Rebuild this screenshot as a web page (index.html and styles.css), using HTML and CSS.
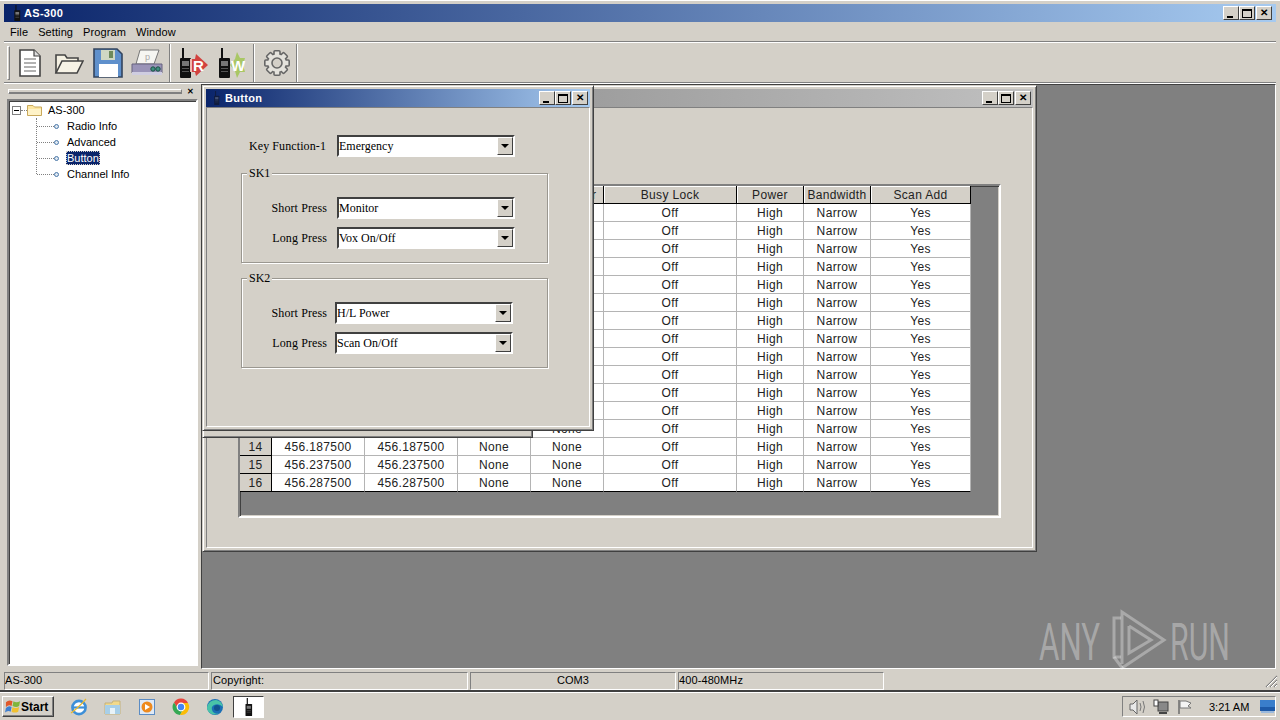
FILE: index.html
```html
<!DOCTYPE html>
<html lang="en">
<head>
    <meta charset="UTF-8">
    <title>AS-300</title>
    <link rel="stylesheet" href="styles.css">
</head>
<body>

    <!-- shared icon parts -->
    <svg class="defs" width="0" height="0">
        <symbol id="radio" viewBox="0 0 14 30">
            <rect x="4" y="0" width="2" height="12" fill="#111"/>
            <rect x="2" y="10" width="11" height="20" rx="1" fill="#111"/>
            <rect x="4" y="13" width="7" height="5" fill="#777"/>
            <rect x="4" y="20" width="7" height="1" fill="#555"/>
            <rect x="4" y="23" width="7" height="1" fill="#555"/>
        </symbol>
        <rect id="tooth" x="10" y="0.8" width="6" height="6" rx="1" fill="#e4e2dc" stroke="#666" stroke-width="1.6"/>
    </svg>

    <div class="app">
        <div class="titlebar">
            <svg class="title-icon" width="10" height="16"><use href="#radio"/></svg>
            <span class="title-text">AS-300</span>
            <div class="win-buttons">
                <span class="win-btn"><i class="ico-min"></i></span>
                <span class="win-btn"><i class="ico-max"></i></span>
                <span class="win-btn btn-close">&#10005;</span>
            </div>
        </div>

        <div class="menubar">
            <span>File</span>
            <span>Setting</span>
            <span>Program</span>
            <span>Window</span>
        </div>

        <div class="toolbar">
            <div class="grip"></div>
            <div class="tool">
                <svg width="24" height="30" viewBox="0 0 24 30">
                    <path d="M2 2H16L22 8V28H2Z" fill="#fff" stroke="#444" stroke-width="1.6"/>
                    <path d="M16 2V8H22" fill="#ddd" stroke="#444" stroke-width="1.2"/>
                    <path d="M6 11H18M6 15H18M6 19H18M6 23H18" stroke="#666" stroke-width="1.2"/>
                </svg>
            </div>
            <div class="tool">
                <svg width="30" height="24" viewBox="0 0 30 24">
                    <path d="M2 22V4H11L13 7H24V11" fill="#f4f0e2" stroke="#444" stroke-width="1.6"/>
                    <path d="M2 22L8 10H29L23 22Z" fill="#f7f3e6" stroke="#444" stroke-width="1.6"/>
                </svg>
            </div>
            <div class="tool">
                <svg width="30" height="30" viewBox="0 0 30 30">
                    <path d="M1 1H24L29 6V29H1Z" fill="#5f90cc" stroke="#33445e" stroke-width="1.6"/>
                    <rect x="8" y="2" width="14" height="10" fill="#cfd8c4"/>
                    <rect x="16" y="3" width="4" height="7" fill="#6e8a5c"/>
                    <rect x="6" y="16" width="19" height="13" fill="#fff"/>
                </svg>
            </div>
            <div class="tool">
                <svg width="32" height="28" viewBox="0 0 32 28">
                    <path d="M9 1H28L23 15H5Z" fill="#f6f6f2" stroke="#777"/>
                    <text x="14" y="11" class="printer-mark">p</text>
                    <path d="M1 15H31V24H1Z" fill="#9a94b8" stroke="#66627e"/>
                    <rect x="1" y="23" width="30" height="3" fill="#cfcde0"/>
                    <circle cx="22" cy="20" r="2.2" fill="#3f8f7f" stroke="#1d4f46"/>
                    <circle cx="27" cy="20" r="2.2" fill="#3f8f7f" stroke="#1d4f46"/>
                </svg>
            </div>
            <div class="tool-sep"></div>
            <div class="tool">
                <svg width="30" height="31" viewBox="0 0 30 31">
                    <use href="#radio" x="0" y="1" width="14" height="30"/>
                    <path d="M12 12H17L18 7L30 18L18 29L17 25H12Z" fill="#d2423f"/>
                    <path d="M12 12H14V25H12Z" fill="#f0b8b0"/>
                    <text x="15" y="24" class="tool-letter">R</text>
                </svg>
            </div>
            <div class="tool">
                <svg width="30" height="31" viewBox="0 0 30 31">
                    <use href="#radio" x="0" y="1" width="14" height="30"/>
                    <path d="M13 18L18 12L20 5L23 11H28L26 18L28 25H23L20 31L18 24Z" fill="#a9c765"/>
                    <text x="14" y="24" class="tool-letter">W</text>
                </svg>
            </div>
            <div class="tool-sep sep-b"></div>
            <div class="tool">
                <svg width="26" height="26" viewBox="0 0 26 26">
                    <circle cx="13" cy="13" r="9.4" fill="#e4e2dc" stroke="#666" stroke-width="1.6"/>
                    <use href="#tooth"/>
                    <use href="#tooth" transform="rotate(45 13 13)"/>
                    <use href="#tooth" transform="rotate(90 13 13)"/>
                    <use href="#tooth" transform="rotate(135 13 13)"/>
                    <use href="#tooth" transform="rotate(180 13 13)"/>
                    <use href="#tooth" transform="rotate(225 13 13)"/>
                    <use href="#tooth" transform="rotate(270 13 13)"/>
                    <use href="#tooth" transform="rotate(315 13 13)"/>
                    <circle cx="13" cy="13" r="8.8" fill="#e4e2dc"/>
                    <circle cx="13" cy="13" r="5" fill="#d4d0c8" stroke="#666" stroke-width="1.6"/>
                </svg>
            </div>
            <div class="tool-sep sep-c"></div>
        </div>

        <div class="main">
            <!-- Left tree panel -->
            <div class="side">
                <div class="side-head">
                    <div class="side-grip"></div>
                    <span class="side-close">&#10005;</span>
                </div>
                <div class="tree">
                    <div class="tree-root">
                        <span class="expander"></span>
                        <span class="root-line"></span>
                        <svg width="15" height="12" viewBox="0 0 15 12">
                            <path d="M0.5 11.5V1.5H6L7.5 3H14.5V11.5Z" fill="#fde6a0" stroke="#c9a95c"/>
                            <rect x="1" y="5" width="13" height="6" fill="#fff3c8"/>
                        </svg>
                        <span class="tree-label">AS-300</span>
                    </div>
                    <ul class="tree-items">
                        <li><span class="branch"></span><span class="node"></span><span class="tree-label">Radio Info</span></li>
                        <li><span class="branch"></span><span class="node"></span><span class="tree-label">Advanced</span></li>
                        <li><span class="branch"></span><span class="node"></span><span class="tree-label selected">Button</span></li>
                        <li><span class="branch"></span><span class="node"></span><span class="tree-label">Channel Info</span></li>
                    </ul>
                </div>
            </div>

            <!-- MDI area with child windows -->
            <div class="mdi">
                <div class="win win-channel">
                    <div class="win-title inactive">
                        <div class="win-buttons">
                            <span class="win-btn"><i class="ico-min"></i></span>
                            <span class="win-btn"><i class="ico-max"></i></span>
                            <span class="win-btn btn-close">&#10005;</span>
                        </div>
                    </div>
                    <div class="win-body channel-body">
                        <div class="grid-box">
                            <table class="grid">
                                <colgroup>
                                    <col class="c-num"><col class="c-freq"><col class="c-freq"><col class="c-qt"><col class="c-qt">
                                    <col class="c-busy"><col class="c-small"><col class="c-small"><col class="c-scan">
                                </colgroup>
                                <thead>
                                    <tr><th></th><th></th><th></th><th>T Encoder</th><th>T Decoder</th><th>Busy Lock</th><th>Power</th><th>Bandwidth</th><th>Scan Add</th></tr>
                                </thead>
                                <tbody>
                                    <tr><td class="num"></td><td></td><td></td><td></td><td></td><td>Off</td><td>High</td><td>Narrow</td><td>Yes</td></tr>
                                    <tr><td class="num"></td><td></td><td></td><td></td><td></td><td>Off</td><td>High</td><td>Narrow</td><td>Yes</td></tr>
                                    <tr><td class="num"></td><td></td><td></td><td></td><td></td><td>Off</td><td>High</td><td>Narrow</td><td>Yes</td></tr>
                                    <tr><td class="num"></td><td></td><td></td><td></td><td></td><td>Off</td><td>High</td><td>Narrow</td><td>Yes</td></tr>
                                    <tr><td class="num"></td><td></td><td></td><td></td><td></td><td>Off</td><td>High</td><td>Narrow</td><td>Yes</td></tr>
                                    <tr><td class="num"></td><td></td><td></td><td></td><td></td><td>Off</td><td>High</td><td>Narrow</td><td>Yes</td></tr>
                                    <tr><td class="num"></td><td></td><td></td><td></td><td></td><td>Off</td><td>High</td><td>Narrow</td><td>Yes</td></tr>
                                    <tr><td class="num"></td><td></td><td></td><td></td><td></td><td>Off</td><td>High</td><td>Narrow</td><td>Yes</td></tr>
                                    <tr><td class="num"></td><td></td><td></td><td></td><td></td><td>Off</td><td>High</td><td>Narrow</td><td>Yes</td></tr>
                                    <tr><td class="num"></td><td></td><td></td><td></td><td></td><td>Off</td><td>High</td><td>Narrow</td><td>Yes</td></tr>
                                    <tr><td class="num"></td><td></td><td></td><td></td><td></td><td>Off</td><td>High</td><td>Narrow</td><td>Yes</td></tr>
                                    <tr><td class="num"></td><td></td><td></td><td></td><td></td><td>Off</td><td>High</td><td>Narrow</td><td>Yes</td></tr>
                                    <tr><td class="num"></td><td></td><td></td><td></td><td>None</td><td>Off</td><td>High</td><td>Narrow</td><td>Yes</td></tr>
                                    <tr><td class="num">14</td><td>456.187500</td><td>456.187500</td><td>None</td><td>None</td><td>Off</td><td>High</td><td>Narrow</td><td>Yes</td></tr>
                                    <tr><td class="num">15</td><td>456.237500</td><td>456.237500</td><td>None</td><td>None</td><td>Off</td><td>High</td><td>Narrow</td><td>Yes</td></tr>
                                    <tr><td class="num">16</td><td>456.287500</td><td>456.287500</td><td>None</td><td>None</td><td>Off</td><td>High</td><td>Narrow</td><td>Yes</td></tr>
                                </tbody>
                            </table>
                        </div>
                    </div>
                </div>

                <div class="win win-hidden"></div>

                <div class="win win-button">
                    <div class="win-title active">
                        <svg class="title-icon dim" width="9" height="14"><use href="#radio"/></svg>
                        <span class="title-text">Button</span>
                        <div class="win-buttons">
                            <span class="win-btn"><i class="ico-min"></i></span>
                            <span class="win-btn"><i class="ico-max"></i></span>
                            <span class="win-btn btn-close">&#10005;</span>
                        </div>
                    </div>
                    <div class="win-body button-body">
                        <div class="field first">
                            <label>Key Function-1</label>
                            <div class="combo"><span>Emergency</span><b class="combo-btn"></b></div>
                        </div>

                        <div class="group sk1">
                            <span class="legend">SK1</span>
                            <div class="field">
                                <label>Short Press</label>
                                <div class="combo"><span>Monitor</span><b class="combo-btn"></b></div>
                            </div>
                            <div class="field">
                                <label>Long Press</label>
                                <div class="combo"><span>Vox On/Off</span><b class="combo-btn"></b></div>
                            </div>
                        </div>

                        <div class="group sk2">
                            <span class="legend">SK2</span>
                            <div class="field">
                                <label>Short Press</label>
                                <div class="combo"><span>H/L Power</span><b class="combo-btn"></b></div>
                            </div>
                            <div class="field">
                                <label>Long Press</label>
                                <div class="combo"><span>Scan On/Off</span><b class="combo-btn"></b></div>
                            </div>
                        </div>
                    </div>
                </div>
            </div>
        </div>

        <div class="statusbar">
            <div class="status s-name">AS-300</div>
            <div class="status s-copy">Copyright:</div>
            <div class="status s-port">COM3</div>
            <div class="status s-band">400-480MHz</div>
            <svg class="resize" width="14" height="14" viewBox="0 0 14 14">
                <path d="M13 2L2 13M13 6L6 13M13 10L10 13" stroke="#808080" stroke-width="1.2"/>
                <path d="M13 3L3 13M13 7L7 13M13 11L11 13" stroke="#fff"/>
            </svg>
        </div>
    </div>

    <!-- Windows taskbar -->
    <div class="taskbar">
        <div class="start">
            <svg width="16" height="15" viewBox="0 0 17 15">
                <path d="M1 3Q4 0 8 2L7 7Q4 5 1 8Z" fill="#e0582a"/>
                <path d="M9 2Q12 4 16 2L15 7Q12 9 8 7Z" fill="#7fb53c"/>
                <path d="M1 9Q4 6 7 8L6 13Q3 11 0 14Z" fill="#3f7fd0"/>
                <path d="M8 8Q11 10 15 8L14 13Q10 15 7 13Z" fill="#f0c030"/>
            </svg>
            <span>Start</span>
        </div>
        <div class="launch">
            <svg width="18" height="18" viewBox="0 0 18 18">
                <circle cx="9" cy="9.5" r="6.6" fill="#fff" stroke="#3d8fd8" stroke-width="2.6"/>
                <path d="M3 9.5H15" stroke="#3d8fd8" stroke-width="2.2"/>
                <path d="M1 15Q8 10 16 1" fill="none" stroke="#e8b830" stroke-width="1.2"/>
            </svg>
        </div>
        <div class="launch">
            <svg width="18" height="18" viewBox="0 0 18 18">
                <path d="M1 5H8L9 3H16V16H1Z" fill="#f2d98a" stroke="#c4b17a"/>
                <rect x="1" y="7" width="15" height="9" fill="#a8cfe8"/>
                <rect x="6" y="10" width="5" height="6" fill="#e8f2f8"/>
            </svg>
        </div>
        <div class="launch">
            <svg width="16" height="16" viewBox="0 0 16 16">
                <rect x="0.5" y="0.5" width="15" height="15" fill="#dfe9f6" stroke="#5b8cc4"/>
                <circle cx="8" cy="8" r="5.5" fill="#ee8a1e"/>
                <path d="M6 5L11 8L6 11Z" fill="#fff"/>
            </svg>
        </div>
        <div class="launch">
            <svg width="18" height="18" viewBox="0 0 18 18">
                <path d="M2 4.5A8 8 0 0 1 16 5L9 5L6 11Z" fill="#e8453c"/>
                <path d="M2 4.5A8 8 0 0 0 8 17L11.5 11L6 11Z" fill="#34a853"/>
                <path d="M16 5A8 8 0 0 1 8 17L11.5 11L9 5Z" fill="#fbbc05"/>
                <circle cx="9" cy="9" r="3.8" fill="#4285f4" stroke="#fff" stroke-width="1.2"/>
            </svg>
        </div>
        <div class="launch">
            <svg width="18" height="18" viewBox="0 0 18 18">
                <circle cx="9" cy="9" r="8" fill="#1b6fb5"/>
                <path d="M1 9Q3 2 10 2Q16 3 17 9Q13 5 8 7Q4 9 7 14Q10 17 14 15Q8 18 4 15Q1 13 1 9Z" fill="#49c3a8"/>
                <circle cx="11" cy="10" r="3" fill="#12528f"/>
            </svg>
        </div>
        <div class="task-app">
            <svg width="9" height="18"><use href="#radio"/></svg>
        </div>
        <div class="tray">
            <svg width="18" height="16" viewBox="0 0 18 16">
                <path d="M1 5H4L8 1V15L4 11H1Z" fill="#e8e8e8" stroke="#666"/>
                <path d="M11 4Q13 8 11 12M14 2Q17 8 14 14" fill="none" stroke="#777"/>
            </svg>
            <svg width="16" height="16" viewBox="0 0 16 16">
                <rect x="5" y="3" width="10" height="9" fill="#888" stroke="#444"/>
                <rect x="1" y="1" width="4" height="6" fill="#fff" stroke="#444"/>
                <path d="M6 14H14" stroke="#444" stroke-width="2"/>
            </svg>
            <svg class="tray-flag" width="16" height="16" viewBox="0 0 16 16">
                <path d="M2 1V15" stroke="#666" stroke-width="1.4"/>
                <path d="M3 2H9L14 4L11 7L14 9H3Z" fill="#f4f4f4" stroke="#777"/>
            </svg>
            <span class="clock">3:21 AM</span>
            <svg class="show-desktop" width="15" height="14" viewBox="0 0 15 14">
                <rect width="15" height="11" fill="#3a7ecb"/>
                <rect y="7" width="15" height="4" fill="#1e5aa8"/>
                <rect x="1" y="11" width="13" height="2" fill="#9bb9dc"/>
            </svg>
        </div>
    </div>

    <!-- ANY.RUN watermark -->
    <svg class="watermark" width="241" height="70" viewBox="0 0 241 70">
        <text x="0" y="51" textLength="61" lengthAdjust="spacingAndGlyphs">ANY</text>
        <text x="131" y="51" textLength="60" lengthAdjust="spacingAndGlyphs">RUN</text>
        <path d="M82 9H75V48H82" fill="none"/>
        <path d="M83 55V3L125 31L83 59" fill="none"/>
        <path d="M90 17V44L112 31L90 17M75 48L84 60" fill="none"/>
    </svg>

</body>
</html>
```

FILE: styles.css
```css
* {
    box-sizing: border-box;
}

body {
    margin: 0;
    width: 1280px;
    height: 720px;
    overflow: hidden;
    position: relative;
    background: #d4d0c8;
    color: #000;
    font-family: "Liberation Sans", Arial, sans-serif;
    font-size: 11px;
}

.defs {
    position: absolute;
}

.app {
    height: 692px;
    padding: 3px 4px 0;
    display: flex;
    flex-direction: column;
    border-top: 1px solid #fff;
    border-bottom: 2px solid #404040;
}

/* Title bars */
.titlebar {
    height: 18px;
    flex: none;
    display: flex;
    align-items: center;
    padding-left: 8px;
    background: linear-gradient(to right, #0a246a, #a6caf0);
    color: #fff;
    font-weight: bold;
}

.title-icon {
    flex: none;
    margin-right: 2px;
}

.title-icon.dim {
    opacity: 0.5;
    margin-right: 4px;
}

.title-text {
    font-size: 11px;
    letter-spacing: 0.3px;
}

.win-buttons {
    margin-left: auto;
    display: flex;
    padding-right: 4px;
}

.win-title .win-buttons {
    padding-right: 2px;
}

.win-btn {
    width: 16px;
    height: 14px;
    background: #d4d0c8;
    border: 1px solid;
    border-color: #fff #404040 #404040 #fff;
    display: flex;
    align-items: center;
    justify-content: center;
    color: #000;
    font-size: 10px;
    font-weight: bold;
    line-height: 1;
}

.btn-close {
    margin-left: 1px;
}

.ico-min {
    width: 6px;
    height: 2px;
    background: #000;
    margin-top: 7px;
    margin-right: 3px;
}

.ico-max {
    width: 10px;
    height: 9px;
    border: 1px solid #000;
    border-top-width: 2px;
}

/* Menu and toolbar */
.menubar {
    height: 20px;
    flex: none;
    display: flex;
    align-items: center;
    gap: 10px;
    padding-left: 6px;
    border-bottom: 1px solid #808080;
    letter-spacing: 0.1px;
}

.toolbar {
    height: 41px;
    flex: none;
    display: flex;
    align-items: center;
    padding-left: 3px;
    border-top: 1px solid #fff;
    border-bottom: 1px solid #808080;
}

.grip {
    width: 3px;
    height: 34px;
    border: 1px solid;
    border-color: #fff #808080 #808080 #fff;
}

.tool {
    width: 39px;
    height: 39px;
    display: flex;
    align-items: center;
    justify-content: center;
    flex: none;
}

.tool-sep {
    width: 2px;
    height: 38px;
    margin: 0 2px 0 3px;
    border-left: 1px solid #808080;
    border-right: 1px solid #fff;
}

.sep-b {
    margin-left: 2px;
}

.sep-c {
    margin-left: 0;
}

.printer-mark {
    font-size: 9px;
    fill: #aaa;
}

.tool-letter {
    font-size: 15px;
    font-weight: bold;
    fill: #fff;
}

/* Main area */
.main {
    flex: 1;
    min-height: 0;
    display: flex;
    border-top: 1px solid #fff;
}

.side {
    width: 197px;
    flex: none;
    display: flex;
    flex-direction: column;
    padding: 0 3px 3px 3px;
}

.side-head {
    height: 15px;
    flex: none;
    display: flex;
    align-items: center;
}

.side-grip {
    width: 174px;
    height: 5px;
    margin-left: 1px;
    border: 1px solid;
    border-color: #fff #808080 #808080 #fff;
    box-shadow: inset 0 -1px 0 #808080;
}

.side-close {
    margin-left: 5px;
    font-size: 8px;
    font-weight: bold;
}

.tree {
    flex: 1;
    background: #fff;
    border: 2px solid;
    border-color: #808080 #fff #fff #808080;
    box-shadow: inset 1px 1px 0 #404040;
    padding: 1px 0 0 3px;
}

.tree-root {
    height: 16px;
    display: flex;
    align-items: center;
}

.expander {
    width: 9px;
    height: 9px;
    border: 1px solid #808080;
    background: linear-gradient(#000, #000) center / 5px 1px no-repeat;
    flex: none;
}

.root-line {
    width: 6px;
    border-top: 1px dotted #808080;
    flex: none;
}

.tree-root .tree-label {
    margin-left: 5px;
}

.tree-label {
    padding: 1px;
    line-height: 12px;
}

.tree-items {
    list-style: none;
    margin: 0 0 0 24px;
    padding: 0;
    height: 56px;
    border-left: 1px dotted #808080;
}

.tree-items li {
    height: 16px;
    display: flex;
    align-items: center;
}

.branch {
    width: 17px;
    border-top: 1px dotted #808080;
    flex: none;
}

.node {
    width: 5px;
    height: 5px;
    border-radius: 50%;
    border: 1px solid #4a78a8;
    background: #dfe8f2;
    flex: none;
}

.tree-items .tree-label {
    margin-left: 7px;
}

.selected {
    background: #0a246a;
    color: #fff;
    outline: 1px dotted #d4d0c8;
    outline-offset: -1px;
}

.mdi {
    flex: 1;
    position: relative;
    background: #808080;
    border: 1px solid;
    border-color: #404040 #fff #fff #404040;
}

/* Child windows on the MDI canvas */
.win {
    position: absolute;
    left: 0;
    top: 0;
    display: flex;
    flex-direction: column;
    background: #d4d0c8;
    border: 1px solid;
    border-color: #d4d0c8 #404040 #404040 #d4d0c8;
    box-shadow: inset 1px 1px 0 #fff, inset -1px -1px 0 #808080;
    padding: 3px;
}

.win-channel {
    width: 835px;
    height: 467px;
}

.win-hidden {
    width: 331px;
    height: 353px;
}

.win-button {
    width: 392px;
    height: 346px;
}

.win-title {
    height: 18px;
    flex: none;
    display: flex;
    align-items: center;
    padding-left: 6px;
    color: #fff;
    font-weight: bold;
}

.win-title.active {
    background: linear-gradient(to right, #0a246a, #a6caf0);
}

.win-title.inactive {
    background: linear-gradient(to right, #808080, #c0c0c0);
}

.win-body {
    flex: 1;
    min-height: 0;
    border: 1px solid;
    border-color: #808080 #fff #fff #808080;
}

/* Channel grid */
.channel-body {
    padding: 76px 0 0 31px;
}

.grid-box {
    width: 763px;
    height: 334px;
    background: #808080;
    border: 2px solid;
    border-color: #808080 #fff #fff #808080;
    box-shadow: inset 1px 1px 0 #404040, inset -1px -1px 0 #d4d0c8;
}

.grid {
    width: 731px;
    table-layout: fixed;
    border-collapse: separate;
    border-spacing: 0;
    font-size: 12px;
    letter-spacing: 0.35px;
    color: #222;
    text-align: center;
}

.c-num { width: 32px; }
.c-freq { width: 93px; }
.c-qt { width: 73px; }
.c-busy { width: 133px; }
.c-small { width: 67px; }
.c-scan { width: 100px; }

.grid th {
    height: 18px;
    padding: 0;
    font-weight: normal;
    background: #d4d0c8;
    border-right: 1px solid #000;
    border-bottom: 1px solid #000;
    box-shadow: inset 1px 1px 0 #fff;
}

.grid td {
    height: 18px;
    padding: 0;
    background: #fff;
    border-right: 1px solid #b4b4b4;
    border-bottom: 1px solid #b4b4b4;
}

.grid td.num {
    background: #d4d0c8;
    border-right-color: #000;
    border-bottom-color: #000;
}

.grid tbody tr:last-child td {
    border-bottom-color: #000;
}

/* Button settings form */
.button-body {
    padding: 27px 0 0 34px;
    font-family: "Liberation Serif", "Times New Roman", serif;
    font-size: 12px;
}

.field {
    display: flex;
    align-items: center;
    gap: 10px;
    height: 22px;
}

.field label {
    width: 85px;
    text-align: right;
    white-space: nowrap;
    letter-spacing: 0.1px;
}

.field.first {
    gap: 11px;
}

.combo {
    width: 178px;
    height: 22px;
    display: flex;
    align-items: center;
    justify-content: space-between;
    background: #fff;
    border: 2px solid;
    border-color: #404040 #fff #fff #404040;
}

.combo-btn {
    width: 16px;
    height: 18px;
    background: #d4d0c8;
    border: 1px solid;
    border-color: #fff #404040 #404040 #fff;
    display: flex;
    align-items: center;
    justify-content: center;
}

.combo-btn::after {
    content: "";
    border: 4px solid transparent;
    border-top-color: #000;
    border-bottom-width: 0;
}

.group {
    width: 307px;
    height: 90px;
    position: relative;
    padding-top: 23px;
    border: 1px solid #9a9790;
    box-shadow: inset 1px 1px 0 #fff, 1px 1px 0 #fff;
    display: flex;
    flex-direction: column;
    gap: 8px;
}

.sk1 {
    margin-top: 16px;
}

.sk2 {
    margin-top: 15px;
}

.sk2 .field {
    gap: 8px;
}

.legend {
    position: absolute;
    left: 5px;
    top: -8px;
    padding: 0 2px;
    background: #d4d0c8;
    line-height: 14px;
}

/* Status bar */
.statusbar {
    height: 21px;
    flex: none;
    display: flex;
    align-items: center;
    gap: 2px;
    padding-top: 2px;
    position: relative;
}

.status {
    height: 18px;
    line-height: 15px;
    border: 1px solid;
    border-color: #808080 #fff #fff #808080;
    white-space: nowrap;
    letter-spacing: 0.1px;
}

.s-name { width: 205px; }
.s-copy { width: 257px; padding-left: 1px; }
.s-port { width: 206px; text-align: center; }
.s-band { width: 206px; }

.resize {
    position: absolute;
    right: -2px;
    bottom: 2px;
}

/* Taskbar */
.taskbar {
    height: 28px;
    display: flex;
    align-items: center;
    border-top: 1px solid #fff;
    padding-left: 2px;
}

.start {
    width: 52px;
    height: 21px;
    flex: none;
    display: flex;
    align-items: center;
    padding-left: 2px;
    border: 1px solid;
    border-color: #fff #404040 #404040 #fff;
    box-shadow: inset -1px -1px 0 #808080;
    font-size: 12px;
    font-weight: bold;
    margin-right: 8px;
}

.launch {
    width: 34px;
    height: 22px;
    flex: none;
    display: flex;
    align-items: center;
    justify-content: center;
}

.task-app {
    width: 31px;
    height: 22px;
    flex: none;
    display: flex;
    align-items: center;
    justify-content: center;
    margin-left: 1px;
    background: #fff;
    border: 1px solid;
    border-color: #404040 #fff #fff #404040;
}

.tray {
    width: 154px;
    height: 21px;
    margin-left: auto;
    margin-right: 4px;
    display: flex;
    align-items: center;
    gap: 6px;
    padding-left: 6px;
    border: 1px solid;
    border-color: #808080 #fff #fff #808080;
}

.tray-flag {
    margin-left: 2px;
}

.clock {
    margin-left: 10px;
    white-space: nowrap;
}

.show-desktop {
    margin-left: auto;
}

/* Watermark over the desktop */
.watermark {
    position: absolute;
    left: 1039px;
    top: 609px;
}

.watermark text {
    font-family: Roboto, "Liberation Sans", sans-serif;
    font-weight: 400;
    font-size: 52px;
    fill: rgba(255, 255, 255, 0.32);
}

.watermark path {
    stroke: rgba(255, 255, 255, 0.32);
    stroke-width: 3;
}
```
